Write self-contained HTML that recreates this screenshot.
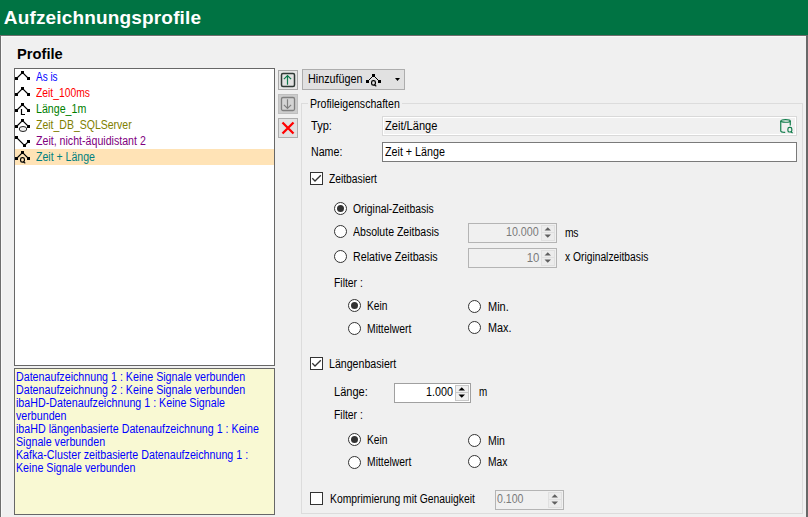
<!DOCTYPE html>
<html><head><meta charset="utf-8"><style>
html,body{margin:0;padding:0;width:808px;height:517px;overflow:hidden;background:#f0f0f0;}
.r{position:absolute;}
.t{position:absolute;white-space:nowrap;font-family:"Liberation Sans",sans-serif;word-spacing:1.2px}
svg{overflow:visible}
</style></head><body>
<div class="r" style="left:0px;top:0px;width:808px;height:35px;background:#007343"></div>
<div class="t" style="left:3.8px;top:7.91px;font-size:19px;line-height:19px;color:#fff;font-weight:bold;letter-spacing:0.16px;">Aufzeichnungsprofile</div>
<div class="r" style="left:0px;top:35px;width:808px;height:1px;background:#6e6e6e"></div>
<div class="r" style="left:0px;top:35px;width:1px;height:482px;background:#6e6e6e"></div>
<div class="r" style="left:1px;top:36px;width:805px;height:1px;background:#f9f9f9"></div>
<div class="r" style="left:1px;top:36px;width:1px;height:481px;background:#f9f9f9"></div>
<div class="r" style="left:806px;top:35px;width:2px;height:482px;background:#686868"></div>
<div class="t" style="left:17px;top:46.55px;font-size:14.7px;line-height:14.7px;color:#000;font-weight:bold;letter-spacing:0px;">Profile</div>
<div class="r" style="left:14px;top:68px;width:261px;height:298px;background:#fff;box-sizing:border-box;border:1px solid #676767"></div>
<div class="r" style="left:15px;top:149px;width:259px;height:16px;background:#ffe3b6"></div>
<div class="t" style="left:36px;top:70.84px;font-size:12px;line-height:12px;color:#0000ff;font-weight:normal;letter-spacing:0px;transform:scaleX(0.83);transform-origin:0 0;word-spacing:0;">As is</div>
<div class="t" style="left:36px;top:86.84px;font-size:12px;line-height:12px;color:#ff0000;font-weight:normal;letter-spacing:0px;transform:scaleX(0.86);transform-origin:0 0;word-spacing:0;">Zeit_100ms</div>
<div class="t" style="left:36px;top:102.84px;font-size:12px;line-height:12px;color:#008000;font-weight:normal;letter-spacing:0px;transform:scaleX(0.887);transform-origin:0 0;word-spacing:0;">Länge_1m</div>
<div class="t" style="left:36px;top:118.84px;font-size:12px;line-height:12px;color:#808000;font-weight:normal;letter-spacing:0px;transform:scaleX(0.875);transform-origin:0 0;word-spacing:0;">Zeit_DB_SQLServer</div>
<div class="t" style="left:36px;top:134.84px;font-size:12px;line-height:12px;color:#800080;font-weight:normal;letter-spacing:0px;transform:scaleX(0.885);transform-origin:0 0;word-spacing:0;">Zeit, nicht-äquidistant 2</div>
<div class="t" style="left:36px;top:150.84px;font-size:12px;line-height:12px;color:#008080;font-weight:normal;letter-spacing:0px;transform:scaleX(0.879);transform-origin:0 0;word-spacing:0;">Zeit + Länge</div>
<svg class="r" style="left:0;top:0" width="808" height="517"><rect x="15" y="77" width="3" height="3" fill="#000"/><rect x="21" y="71" width="3" height="3" fill="#000"/><rect x="27" y="77" width="3" height="3" fill="#000"/><path d="M16.5 78.5 L22.5 72.5 L28.5 78.5" stroke="#000" stroke-width="1.1" fill="none"/><rect x="15" y="93" width="3" height="3" fill="#000"/><rect x="21" y="87" width="3" height="3" fill="#000"/><rect x="27" y="93" width="3" height="3" fill="#000"/><path d="M16.5 94.5 L22.5 88.5 L28.5 94.5" stroke="#000" stroke-width="1.1" fill="none"/><rect x="15" y="109" width="3" height="3" fill="#000"/><rect x="21" y="103" width="3" height="3" fill="#000"/><rect x="27" y="109" width="3" height="3" fill="#000"/><path d="M16.5 110.5 L22.5 104.5 L28.5 110.5" stroke="#000" stroke-width="1.1" fill="none"/><path d="M21.5 109 V114.5 H25" stroke="#000" stroke-width="1.2" fill="none"/><rect x="15" y="125" width="3" height="3" fill="#000"/><rect x="21" y="119" width="3" height="3" fill="#000"/><rect x="27" y="125" width="3" height="3" fill="#000"/><path d="M16.5 126.5 L22.5 120.5 L28.5 126.5" stroke="#000" stroke-width="1.1" fill="none"/><ellipse cx="23" cy="129" rx="3.8" ry="2.5" fill="#eee" stroke="#222" stroke-width="1"/><rect x="15" y="136" width="3" height="3" fill="#000"/><rect x="23" y="144" width="3" height="3" fill="#000"/><rect x="27" y="140" width="3" height="3" fill="#000"/><path d="M16.5 137.5 L24.5 145.5 L28.5 141.5" stroke="#000" stroke-width="1.1" fill="none"/><rect x="15" y="157" width="3" height="3" fill="#000"/><rect x="21" y="151" width="3" height="3" fill="#000"/><rect x="27" y="157" width="3" height="3" fill="#000"/><path d="M16.5 158.5 L22.5 152.5 L28.5 158.5" stroke="#000" stroke-width="1.1" fill="none"/><rect x="20.6" y="157.6" width="3.8" height="4.6" rx="1.7" fill="none" stroke="#000" stroke-width="1.2"/><path d="M23 161.6 L25.3 163.2" stroke="#000" stroke-width="1.1"/></svg>
<div class="r" style="left:14px;top:368px;width:261px;height:147px;background:#f9f9d3;box-sizing:border-box;border:1px solid #676767"></div>
<div class="t" style="left:15.6px;top:370.84px;font-size:12px;line-height:12px;color:#0000ff;font-weight:normal;letter-spacing:0px;transform:scaleX(0.89);transform-origin:0 0;word-spacing:0;">Datenaufzeichnung 1 : Keine Signale verbunden</div>
<div class="t" style="left:15.6px;top:383.84px;font-size:12px;line-height:12px;color:#0000ff;font-weight:normal;letter-spacing:0px;transform:scaleX(0.89);transform-origin:0 0;word-spacing:0;">Datenaufzeichnung 2 : Keine Signale verbunden</div>
<div class="t" style="left:15.6px;top:396.84px;font-size:12px;line-height:12px;color:#0000ff;font-weight:normal;letter-spacing:0px;transform:scaleX(0.89);transform-origin:0 0;word-spacing:0;">ibaHD-Datenaufzeichnung 1 : Keine Signale</div>
<div class="t" style="left:15.6px;top:409.84px;font-size:12px;line-height:12px;color:#0000ff;font-weight:normal;letter-spacing:0px;transform:scaleX(0.89);transform-origin:0 0;word-spacing:0;">verbunden</div>
<div class="t" style="left:15.6px;top:422.84px;font-size:12px;line-height:12px;color:#0000ff;font-weight:normal;letter-spacing:0px;transform:scaleX(0.89);transform-origin:0 0;word-spacing:0;">ibaHD längenbasierte Datenaufzeichnung 1 : Keine</div>
<div class="t" style="left:15.6px;top:435.84px;font-size:12px;line-height:12px;color:#0000ff;font-weight:normal;letter-spacing:0px;transform:scaleX(0.89);transform-origin:0 0;word-spacing:0;">Signale verbunden</div>
<div class="t" style="left:15.6px;top:448.84px;font-size:12px;line-height:12px;color:#0000ff;font-weight:normal;letter-spacing:0px;transform:scaleX(0.89);transform-origin:0 0;word-spacing:0;">Kafka-Cluster zeitbasierte Datenaufzeichnung 1 :</div>
<div class="t" style="left:15.6px;top:461.84px;font-size:12px;line-height:12px;color:#0000ff;font-weight:normal;letter-spacing:0px;transform:scaleX(0.89);transform-origin:0 0;word-spacing:0;">Keine Signale verbunden</div>
<div class="r" style="left:278px;top:70px;width:20px;height:20px;background:#e6e6e6;box-sizing:border-box;border:1px solid #a8a8a8"></div>
<div class="r" style="left:278px;top:94px;width:20px;height:20px;background:#cccccc;box-sizing:border-box;border:1px solid #bfbfbf"></div>
<div class="r" style="left:278px;top:118px;width:20px;height:20px;background:#e1e1e1;box-sizing:border-box;border:1px solid #adadad"></div>
<svg class="r" style="left:278px;top:70px" width="20" height="68"><rect x="3.5" y="3.5" width="13" height="13" rx="1.5" fill="#e2e2e2" stroke="#2f3a36" stroke-width="1.5"/><path d="M9.5 14.8 V5.8 M5.9 9.2 L9.5 5.6 L13.1 9.2" stroke="#0d7a4c" stroke-width="1.2" fill="none"/><rect x="3.5" y="27.5" width="13" height="13" rx="1.5" fill="#d4d4d4" stroke="#808080" stroke-width="1.3"/><path d="M9.5 29.2 V38.2 M5.9 34.8 L9.5 38.4 L13.1 34.8" stroke="#808080" stroke-width="1.2" fill="none"/><path d="M4.5 52.5 L15.5 63.5 M15.5 52.5 L4.5 63.5" stroke="#ff0000" stroke-width="2.3" fill="none"/></svg>
<div class="r" style="left:302px;top:69px;width:103px;height:21px;background:#e1e1e1;box-sizing:border-box;border:1px solid #adadad"></div>
<div class="t" style="left:308px;top:72.84px;font-size:12px;line-height:12px;color:#000;font-weight:normal;letter-spacing:0px;transform:scaleX(0.8991);transform-origin:0 0;word-spacing:0;">Hinzufügen</div>
<svg class="r" style="left:360px;top:69px" width="45" height="21"><rect x="6" y="11" width="3" height="3"/><rect x="12" y="5" width="3" height="3"/><rect x="18" y="11" width="3" height="3"/><path d="M7.5 12.5 L13.5 6.5 L19.5 12.5" stroke="#000" stroke-width="1" fill="none"/><rect x="11.6" y="11.6" width="3.8" height="4.6" rx="1.7" fill="none" stroke="#000" stroke-width="1.2"/><path d="M14 15.6 L16.3 17.2" stroke="#000" stroke-width="1.1"/><path d="M35 9 H40 L37.5 12 Z" fill="#000"/></svg>
<div class="r" style="left:301px;top:103px;width:502px;height:411px;box-sizing:border-box;border:1px solid #dcdcdc"></div>
<div class="r" style="left:308px;top:100px;width:94px;height:8px;background:#f0f0f0"></div>
<div class="t" style="left:310.2px;top:97.84px;font-size:12px;line-height:12px;color:#000;font-weight:normal;letter-spacing:0px;transform:scaleX(0.8796);transform-origin:0 0;word-spacing:0;">Profileigenschaften</div>
<div class="t" style="left:310.7px;top:119.84px;font-size:12px;line-height:12px;color:#000;font-weight:normal;letter-spacing:0px;transform:scaleX(0.9209);transform-origin:0 0;word-spacing:0;">Typ:</div>
<div class="r" style="left:382px;top:116px;width:415px;height:20px;background:#f0f0f0;box-sizing:border-box;border:1px solid #d9d9d9;box-shadow:inset 0 0 0 1px #fff"></div>
<div class="t" style="left:384.5px;top:119.84px;font-size:12px;line-height:12px;color:#000;font-weight:normal;letter-spacing:0px;transform:scaleX(0.9239);transform-origin:0 0;word-spacing:0;">Zeit/Länge</div>
<svg class="r" style="left:778px;top:117px" width="18" height="18"><g stroke="#0b7a47" stroke-width="1.15" fill="none"><path d="M2.75 3.9 a4.75 1.35 0 1 0 9.5 0 a4.75 1.35 0 1 0 -9.5 0 Z"/><path d="M2.75 3.9 V14 Q2.75 15.4 7.2 15.4"/><path d="M12.25 3.9 V8.6"/><rect x="9.9" y="10.4" width="3.9" height="4.6" rx="1.6"/><path d="M12.6 14.6 L14.6 16"/></g></svg>
<div class="t" style="left:310.7px;top:145.84px;font-size:12px;line-height:12px;color:#000;font-weight:normal;letter-spacing:0px;transform:scaleX(0.8866);transform-origin:0 0;word-spacing:0;">Name:</div>
<div class="r" style="left:382px;top:142px;width:415px;height:20px;background:#fff;box-sizing:border-box;border:1px solid #7a7a7a"></div>
<div class="t" style="left:384.5px;top:145.84px;font-size:12px;line-height:12px;color:#000;font-weight:normal;letter-spacing:0px;transform:scaleX(0.8932);transform-origin:0 0;word-spacing:0;">Zeit + Länge</div>
<div class="r" style="left:310px;top:172px;width:13px;height:13px;background:#fff;box-sizing:border-box;border:1px solid #333"></div>
<svg class="r" style="left:310px;top:172px" width="13" height="13"><path d="M2.3 6.3 L5 9 L10.8 3.2" stroke="#333" stroke-width="1.3" fill="none"/></svg>
<div class="t" style="left:329.3px;top:172.84px;font-size:12px;line-height:12px;color:#000;font-weight:normal;letter-spacing:0px;transform:scaleX(0.8559);transform-origin:0 0;word-spacing:0;">Zeitbasiert</div>
<svg class="r" style="left:334px;top:202px" width="13" height="13"><circle cx="6.5" cy="6.5" r="6" fill="#fff" stroke="#333" stroke-width="1"/><circle cx="6.5" cy="6.5" r="3.5" fill="#333"/></svg>
<div class="t" style="left:352.5px;top:202.84px;font-size:12px;line-height:12px;color:#000;font-weight:normal;letter-spacing:0px;transform:scaleX(0.8638);transform-origin:0 0;word-spacing:0;">Original-Zeitbasis</div>
<svg class="r" style="left:334px;top:225px" width="13" height="13"><circle cx="6.5" cy="6.5" r="6" fill="#fff" stroke="#333" stroke-width="1"/></svg>
<div class="t" style="left:352.5px;top:225.84px;font-size:12px;line-height:12px;color:#000;font-weight:normal;letter-spacing:0px;transform:scaleX(0.8779);transform-origin:0 0;word-spacing:0;">Absolute Zeitbasis</div>
<svg class="r" style="left:334px;top:250px" width="13" height="13"><circle cx="6.5" cy="6.5" r="6" fill="#fff" stroke="#333" stroke-width="1"/></svg>
<div class="t" style="left:352.5px;top:250.84px;font-size:12px;line-height:12px;color:#000;font-weight:normal;letter-spacing:0px;transform:scaleX(0.8941);transform-origin:0 0;word-spacing:0;">Relative Zeitbasis</div>
<div class="r" style="left:468px;top:223px;width:89px;height:20px;background:#f0f0f0;box-sizing:border-box;border:1px solid #b4b4b4"></div>
<div class="r" style="left:541px;top:225px;width:14px;height:16px;background:#ececec;box-sizing:border-box;border:1px solid #e0e0e0"></div>
<div class="r" style="left:541px;top:232px;width:14px;height:1px;background:#e0e0e0"></div>
<svg class="r" style="left:541px;top:223px" width="14" height="20"><path d="M3.5 7.5 H10 L6.75 4.2 Z M3.5 11.5 H10 L6.75 14.8 Z" fill="#606060"/></svg>
<div class="t" style="right:269px;top:225.84px;font-size:12px;line-height:12px;color:#7a7a7a;letter-spacing:0px;transform:scaleX(0.893);transform-origin:100% 0;word-spacing:0;">10.000</div>
<div class="r" style="left:468px;top:248px;width:89px;height:20px;background:#f0f0f0;box-sizing:border-box;border:1px solid #b4b4b4"></div>
<div class="r" style="left:541px;top:250px;width:14px;height:16px;background:#ececec;box-sizing:border-box;border:1px solid #e0e0e0"></div>
<div class="r" style="left:541px;top:257px;width:14px;height:1px;background:#e0e0e0"></div>
<svg class="r" style="left:541px;top:248px" width="14" height="20"><path d="M3.5 7.5 H10 L6.75 4.2 Z M3.5 11.5 H10 L6.75 14.8 Z" fill="#606060"/></svg>
<div class="t" style="right:269px;top:251.84px;font-size:12px;line-height:12px;color:#7a7a7a;letter-spacing:0px;transform:scaleX(0.9483);transform-origin:100% 0;word-spacing:0;">10</div>
<div class="t" style="left:565px;top:226.84px;font-size:12px;line-height:12px;color:#000;font-weight:normal;letter-spacing:-0.3px;transform:scaleX(0.86);transform-origin:0 0;">ms</div>
<div class="t" style="left:565px;top:250.84px;font-size:12px;line-height:12px;color:#000;font-weight:normal;letter-spacing:0px;transform:scaleX(0.856);transform-origin:0 0;word-spacing:0;">x Originalzeitbasis</div>
<div class="t" style="left:333.8px;top:276.84px;font-size:12px;line-height:12px;color:#000;font-weight:normal;letter-spacing:0px;transform:scaleX(0.8635);transform-origin:0 0;word-spacing:0;">Filter :</div>
<svg class="r" style="left:348px;top:299px" width="13" height="13"><circle cx="6.5" cy="6.5" r="6" fill="#fff" stroke="#333" stroke-width="1"/><circle cx="6.5" cy="6.5" r="3.5" fill="#333"/></svg>
<div class="t" style="left:367.3px;top:299.84px;font-size:12px;line-height:12px;color:#000;font-weight:normal;letter-spacing:0px;transform:scaleX(0.8533);transform-origin:0 0;word-spacing:0;">Kein</div>
<svg class="r" style="left:348px;top:322px" width="13" height="13"><circle cx="6.5" cy="6.5" r="6" fill="#fff" stroke="#333" stroke-width="1"/></svg>
<div class="t" style="left:367.3px;top:322.84px;font-size:12px;line-height:12px;color:#000;font-weight:normal;letter-spacing:0px;transform:scaleX(0.8634);transform-origin:0 0;word-spacing:0;">Mittelwert</div>
<svg class="r" style="left:468px;top:300px" width="13" height="13"><circle cx="6.5" cy="6.5" r="6" fill="#fff" stroke="#333" stroke-width="1"/></svg>
<div class="t" style="left:487.5px;top:300.84px;font-size:12px;line-height:12px;color:#000;font-weight:normal;letter-spacing:0px;transform:scaleX(0.9171);transform-origin:0 0;word-spacing:0;">Min.</div>
<svg class="r" style="left:468px;top:321px" width="13" height="13"><circle cx="6.5" cy="6.5" r="6" fill="#fff" stroke="#333" stroke-width="1"/></svg>
<div class="t" style="left:487.5px;top:321.84px;font-size:12px;line-height:12px;color:#000;font-weight:normal;letter-spacing:0px;transform:scaleX(0.9021);transform-origin:0 0;word-spacing:0;">Max.</div>
<div class="r" style="left:310px;top:357px;width:13px;height:13px;background:#fff;box-sizing:border-box;border:1px solid #333"></div>
<svg class="r" style="left:310px;top:357px" width="13" height="13"><path d="M2.3 6.3 L5 9 L10.8 3.2" stroke="#333" stroke-width="1.3" fill="none"/></svg>
<div class="t" style="left:329.2px;top:357.84px;font-size:12px;line-height:12px;color:#000;font-weight:normal;letter-spacing:0px;transform:scaleX(0.8846);transform-origin:0 0;word-spacing:0;">Längenbasiert</div>
<div class="t" style="left:333.5px;top:385.84px;font-size:12px;line-height:12px;color:#000;font-weight:normal;letter-spacing:0px;transform:scaleX(0.9217);transform-origin:0 0;word-spacing:0;">Länge:</div>
<div class="r" style="left:394px;top:383px;width:77px;height:20px;background:#fff;box-sizing:border-box;border:1px solid #a0a0a0"></div>
<div class="r" style="left:455px;top:385px;width:14px;height:16px;background:#f0f0f0;box-sizing:border-box;border:1px solid #c8c8c8"></div>
<div class="r" style="left:455px;top:392px;width:14px;height:1px;background:#c8c8c8"></div>
<svg class="r" style="left:455px;top:383px" width="14" height="20"><path d="M3.5 7.5 H10 L6.75 4.2 Z M3.5 11.5 H10 L6.75 14.8 Z" fill="#000"/></svg>
<div class="t" style="right:355px;top:385.84px;font-size:12px;line-height:12px;color:#000;letter-spacing:0px;transform:scaleX(0.8971);transform-origin:100% 0;word-spacing:0;">1.000</div>
<div class="t" style="left:479px;top:385.84px;font-size:12px;line-height:12px;color:#000;font-weight:normal;letter-spacing:0px;transform:scaleX(0.82);transform-origin:0 0;">m</div>
<div class="t" style="left:333.8px;top:408.84px;font-size:12px;line-height:12px;color:#000;font-weight:normal;letter-spacing:0px;transform:scaleX(0.8635);transform-origin:0 0;word-spacing:0;">Filter :</div>
<svg class="r" style="left:348px;top:433px" width="13" height="13"><circle cx="6.5" cy="6.5" r="6" fill="#fff" stroke="#333" stroke-width="1"/><circle cx="6.5" cy="6.5" r="3.5" fill="#333"/></svg>
<div class="t" style="left:367.3px;top:433.84px;font-size:12px;line-height:12px;color:#000;font-weight:normal;letter-spacing:0px;transform:scaleX(0.8533);transform-origin:0 0;word-spacing:0;">Kein</div>
<svg class="r" style="left:348px;top:456px" width="13" height="13"><circle cx="6.5" cy="6.5" r="6" fill="#fff" stroke="#333" stroke-width="1"/></svg>
<div class="t" style="left:367.3px;top:455.84px;font-size:12px;line-height:12px;color:#000;font-weight:normal;letter-spacing:0px;transform:scaleX(0.8634);transform-origin:0 0;word-spacing:0;">Mittelwert</div>
<svg class="r" style="left:468px;top:434px" width="13" height="13"><circle cx="6.5" cy="6.5" r="6" fill="#fff" stroke="#333" stroke-width="1"/></svg>
<div class="t" style="left:487.5px;top:434.84px;font-size:12px;line-height:12px;color:#000;font-weight:normal;letter-spacing:0px;transform:scaleX(0.8743);transform-origin:0 0;word-spacing:0;">Min</div>
<svg class="r" style="left:468px;top:455px" width="13" height="13"><circle cx="6.5" cy="6.5" r="6" fill="#fff" stroke="#333" stroke-width="1"/></svg>
<div class="t" style="left:487.5px;top:455.84px;font-size:12px;line-height:12px;color:#000;font-weight:normal;letter-spacing:0px;transform:scaleX(0.8558);transform-origin:0 0;word-spacing:0;">Max</div>
<div class="r" style="left:310px;top:492px;width:13px;height:13px;background:#fff;box-sizing:border-box;border:1px solid #333"></div>
<div class="t" style="left:329.5px;top:492.84px;font-size:12px;line-height:12px;color:#000;font-weight:normal;letter-spacing:0px;transform:scaleX(0.8625);transform-origin:0 0;word-spacing:0;">Komprimierung mit Genauigkeit</div>
<div class="r" style="left:495px;top:490px;width:69px;height:20px;background:#f0f0f0;box-sizing:border-box;border:1px solid #b4b4b4"></div>
<div class="r" style="left:548px;top:492px;width:14px;height:16px;background:#ececec;box-sizing:border-box;border:1px solid #e0e0e0"></div>
<div class="r" style="left:548px;top:499px;width:14px;height:1px;background:#e0e0e0"></div>
<svg class="r" style="left:548px;top:490px" width="14" height="20"><path d="M3.5 7.5 H10 L6.75 4.2 Z M3.5 11.5 H10 L6.75 14.8 Z" fill="#606060"/></svg>
<div class="t" style="left:497px;top:492.84px;font-size:12px;line-height:12px;color:#7a7a7a;font-weight:normal;letter-spacing:0px;transform:scaleX(0.8814);transform-origin:0 0;word-spacing:0;">0.100</div>
</body></html>
